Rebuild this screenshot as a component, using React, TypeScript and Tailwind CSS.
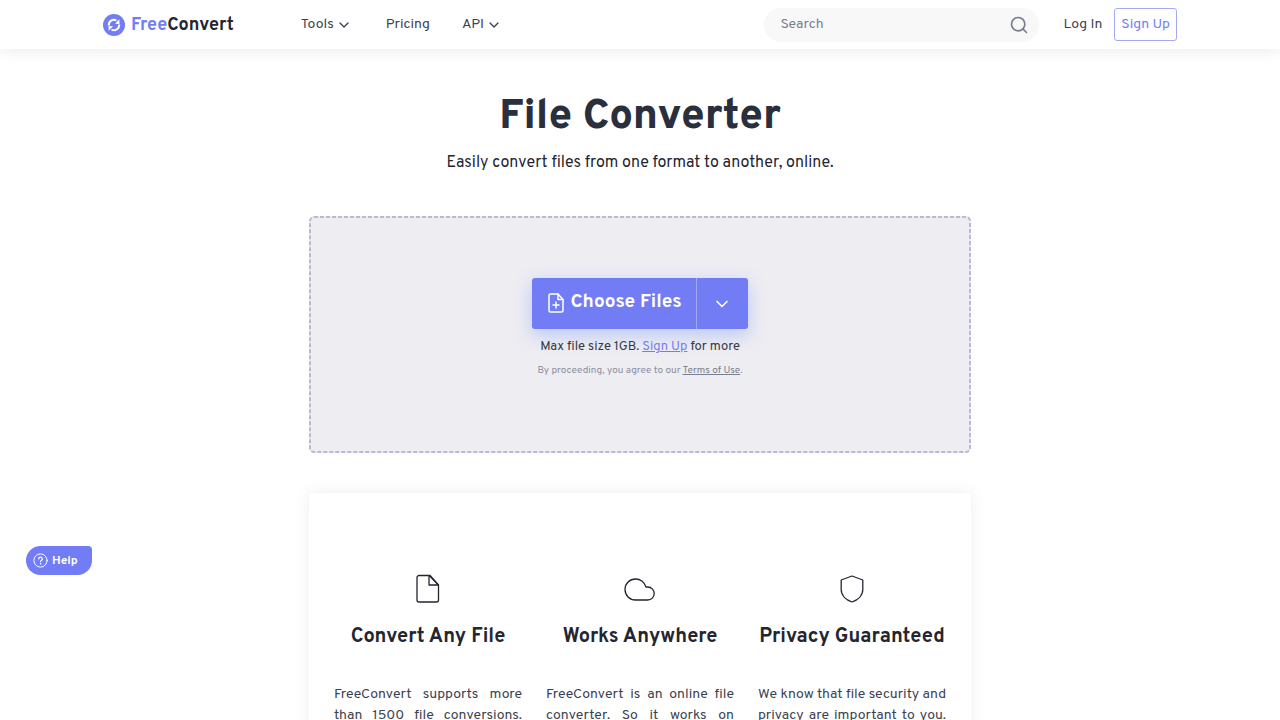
import { ChevronDown, Search } from 'lucide-react';

const features = [
  {
    id: 'convert',
    title: 'Convert Any File',
    icon: FileIcon,
    text: 'FreeConvert supports more than 1500 file conversions. You can convert videos, images, audio files, documents and e-books.',
  },
  {
    id: 'anywhere',
    title: 'Works Anywhere',
    icon: CloudIcon,
    text: 'FreeConvert is an online file converter. So it works on Windows, Mac, Linux and any mobile device with a browser.',
  },
  {
    id: 'privacy',
    title: 'Privacy Guaranteed',
    icon: ShieldIcon,
    text: 'We know that file security and privacy are important to you. That is why we use encryption to protect your files.',
  },
];

function FileIcon() {
  return (
    <svg className="h-8 w-8" viewBox="0 0 32 32" fill="none" stroke="#23262f" strokeWidth="1.3" strokeLinejoin="round" aria-hidden="true">
      <path d="M18 2.500H7a2 2 0 0 0-2 2v22.500a2 2 0 0 0 2 2h17.500a2 2 0 0 0 2-2V12z" />
      <path d="M17 2.500v9.500h9.500L17.500 2.800" />
    </svg>
  );
}

function CloudIcon() {
  return (
    <svg className="h-8 w-8" viewBox="0 0 32 32" fill="none" stroke="#23262f" strokeWidth="1.3" strokeLinejoin="round" aria-hidden="true">
      <path d="M11.500 6a10.500 10.500 0 0 0 0 21h12.200a6.500 6.500 0 0 0 0-13h-1.700A10.700 10.700 0 0 0 11.500 6z" />
    </svg>
  );
}

function ShieldIcon() {
  return (
    <svg className="h-8 w-8" viewBox="0 0 32 32" fill="none" stroke="#23262f" strokeWidth="1.3" strokeLinejoin="round" aria-hidden="true">
      <path d="M16 3L5.200 7v9.500c0 6 5 10.500 10.800 12.500 5.800-2 10.800-6.500 10.800-12.500V7z" />
    </svg>
  );
}

function FilePlusIcon() {
  return (
    <svg className="h-5 w-4" viewBox="0 0 16 20" fill="none" stroke="currentColor" strokeWidth="1.500" strokeLinecap="round" strokeLinejoin="round" aria-hidden="true">
      <path d="M10 1H2.500A1.500 1.500 0 0 0 1 2.500v15A1.500 1.500 0 0 0 2.500 19h11a1.500 1.500 0 0 0 1.500-1.500V6.500z" />
      <path d="M10 1v5.500h5" />
      <path d="M8 9v6M5 12h6" />
    </svg>
  );
}

function Logo() {
  return (
    <a href="#" className="flex items-center gap-1.5 text-lg leading-6 font-bold text-[#23262f]">
      <svg className="h-[22px] w-[22px]" viewBox="0 0 22 22" fill="none" aria-hidden="true">
        <circle cx="11" cy="11" r="11" fill="#727cf5" />
        <path d="M5.800 11.500A5.200 5.200 0 0 1 13.500 6.500M16.200 10.500A5.200 5.200 0 0 1 8.500 15.500" stroke="#fff" strokeWidth="2" />
        <path d="M12 9.800l4.500.2-.2-4.700zM10 12.200l-4.500-.2.200 4.700z" fill="#fff" />
      </svg>
      <span className="pt-0.5">
        <span className="text-[#727cf5]">Free</span>Convert
      </span>
    </a>
  );
}

function Header() {
  return (
    <header className="bg-white shadow-[0_2px_16px_rgba(0,0,0,0.08)]">
      <div className="mx-auto flex h-[49px] max-w-[1106px] items-center px-4 text-sm text-[#3b4252]">
        <Logo />
        <nav className="ml-[67px] flex items-center">
          <button className="flex items-center gap-0.5">
            Tools
            <ChevronDown className="h-4 w-4" />
          </button>
          <a href="#" className="ml-[34px]">Pricing</a>
          <button className="ml-8 flex items-center gap-0.5">
            API
            <ChevronDown className="h-4 w-4" />
          </button>
        </nav>
        <form className="ml-auto flex h-[34px] w-[275px] items-center rounded-full bg-[#f8f8f8] pr-2.5 pl-4">
          <input
            type="text"
            aria-label="Search"
            placeholder="Search"
            className="min-w-0 flex-1 bg-transparent outline-none placeholder:text-[#777e90]"
          />
          <button type="button" aria-label="Submit search">
            <Search className="h-5 w-5 text-[#777e90]" />
          </button>
        </form>
        <a href="#" className="ml-6">Log In</a>
        <a href="#" className="ml-3 flex h-[33px] items-center rounded-[3px] border border-[#a3a9f8] px-1.5 text-[#727cf5]">
          Sign Up
        </a>
      </div>
    </header>
  );
}

function UploadBox() {
  return (
    <section className="relative mt-[41px] flex flex-col items-center rounded-[5px] bg-[#eeedf2] pt-[62px] pb-[72px]">
      <svg className="pointer-events-none absolute inset-0 h-full w-full overflow-visible p-px" fill="none" aria-hidden="true">
        <rect width="100%" height="100%" rx="4" stroke="#bbb9d8" strokeWidth="2" strokeDasharray="4 2" />
      </svg>
      <div className="flex h-[51px] rounded-[3px] bg-[#727cf5] text-white shadow-[0_6px_18px_rgba(80,130,255,0.35)]">
        <button className="flex items-center gap-1.5 border-r border-[#a3a9f8] pr-3.5 pb-0.5 pl-4 text-[19px] font-bold">
          <FilePlusIcon />
          Choose Files
        </button>
        <button aria-label="More sources" className="flex w-[51px] items-center justify-center">
          <ChevronDown className="h-5 w-5" />
        </button>
      </div>
      <p className="mt-2 text-[13px] leading-5 text-[#353945]">
        Max file size 1GB. <a href="#" className="text-[#727cf5] underline">Sign Up</a> for more
      </p>
      <p className="mt-1 text-[10px] leading-5 text-[#8b8f9f]">
        By proceeding, you agree to our <a href="#" className="text-[#777e90] underline">Terms of Use</a>.
      </p>
    </section>
  );
}

export default function App() {
  return (
    <div className="min-h-screen bg-white font-['Overpass','Roboto',sans-serif] text-[#23262f]">
      <Header />
      <main className="mx-auto max-w-[662px]">
        <h1 className="mt-11 text-center text-[42px] leading-[50px] font-extrabold text-[#2a2f3d]">File Converter</h1>
        <p className="mt-2 text-center text-base leading-6 text-[#23262f]">
          Easily convert files from one format to another, online.
        </p>
        <UploadBox />
        <section className="mt-10 grid grid-cols-3 gap-6 rounded-[3px] px-[25px] pt-20 pb-16 shadow-[0_0_18px_rgba(0,0,0,0.07)]">
          {features.map((feature) => (
            <article key={feature.id} className="flex flex-col items-center">
              <feature.icon />
              <h2 className="mt-[18px] text-xl leading-7 font-bold whitespace-nowrap">{feature.title}</h2>
              <p className="mt-[33px] text-justify text-sm leading-[21px] text-[#3b4252]">{feature.text}</p>
            </article>
          ))}
        </section>
      </main>
      <button className="fixed top-[546px] left-[26px] flex h-[29px] items-center gap-1 rounded-[15px] rounded-tr-[4px] bg-[#727cf5] pr-3.5 pl-[7px] text-xs font-bold text-white">
        <svg className="h-[15px] w-[15px]" viewBox="0 0 15 15" fill="none" stroke="currentColor" strokeLinecap="round" aria-hidden="true">
          <circle cx="7.500" cy="7.500" r="6.600" />
          <path d="M5.700 6a1.800 1.800 0 1 1 2.700 1.500c-.7.400-.9.700-.9 1.300" strokeWidth="1.200" />
          <circle cx="7.500" cy="10.900" r=".3" />
        </svg>
        Help
      </button>
    </div>
  );
}
